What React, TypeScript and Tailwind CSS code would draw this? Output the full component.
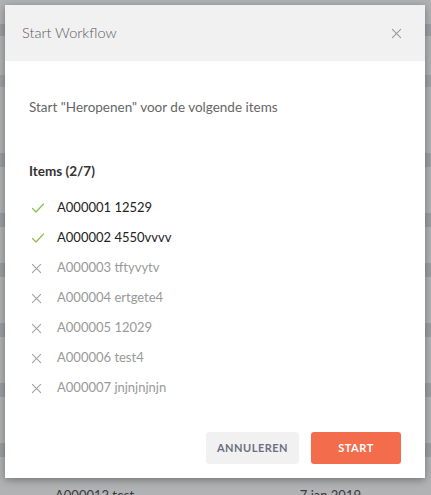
import React from 'react';

type Item = { code: string; name: string; ok: boolean };

const items: Item[] = [
  { code: 'A000001', name: '12529', ok: true },
  { code: 'A000002', name: '4550vvvv', ok: true },
  { code: 'A000003', name: 'tftyvytv', ok: false },
  { code: 'A000004', name: 'ertgete4', ok: false },
  { code: 'A000005', name: '12029', ok: false },
  { code: 'A000006', name: 'test4', ok: false },
  { code: 'A000007', name: 'jnjnjnjnjn', ok: false },
];

const CheckIcon = () => (
  <svg width="14" height="14" viewBox="0 0 14 14" fill="none">
    <path d="M1.5 7.5 L5 11 L12.5 3" stroke="#8cc152" strokeWidth="1.3" strokeLinecap="round" strokeLinejoin="round" />
  </svg>
);

const CrossIcon = ({ color = '#9a9a9a', size = 12 }: { color?: string; size?: number }) => (
  <svg width={size} height={size} viewBox="0 0 12 12" fill="none">
    <path d="M1.5 1.5 L10.5 10.5 M10.5 1.5 L1.5 10.5" stroke={color} strokeWidth="1.2" strokeLinecap="round" />
  </svg>
);

const App: React.FC = () => {
  return (
    <div
      className="relative w-[431px] h-[495px] overflow-hidden bg-[#b1b2b4]"
      style={{ fontFamily: 'Lato, "Open Sans", sans-serif' }}
    >
      {/* page behind the overlay */}
      <div className="flex flex-col">
        <div className="h-[24px]" />
        <div className="h-[12px] bg-[#9b9ea3]" />
        <div className="h-[39px]" />
        <div className="h-[12px] bg-[#9fa1a6]" />
        <div className="h-[66px]" />
        <div className="h-[14px] bg-[#9b9ea3]" />
        <div className="h-[46px]" />
        <div className="h-[14px] bg-[#9b9ea3]" />
        <div className="h-[36px]" />
        <div className="h-[14px] bg-[#9b9ea3]" />
        <div className="h-[46px]" />
        <div className="h-[14px] bg-[#9b9ea3]" />
        <div className="h-[46px]" />
        <div className="h-[14px] bg-[#9b9ea3]" />
        <div className="h-[46px]" />
        <div className="h-[14px] bg-[#9b9ea3]" />
        <div className="h-[30px]" />
        <div className="flex items-start text-[13px] text-[#3a3b3e] leading-[16px]">
          <span className="ml-[55px]">A000012 test</span>
          <span className="ml-auto mr-[70px]">7 jan 2019</span>
        </div>
      </div>

      {/* modal */}
      <div className="absolute left-[5px] top-[5px] w-[420px] h-[473px] bg-white flex flex-col shadow-[0_2px_8px_rgba(0,0,0,0.35)]">
        <div className="h-[56px] bg-[#f1f1f1] flex items-center pl-[17px] pr-[23px]">
          <span className="text-[14.5px] text-[#5a5a5a] font-light">Start Workflow</span>
          <button className="ml-auto">
            <CrossIcon color="#9a9a9a" size={11} />
          </button>
        </div>

        <div className="flex-1 px-[24px] pt-[36px]">
          <p className="text-[13.5px] leading-[20px] text-[#666]">
            Start "Heropenen" voor de volgende items
          </p>
          <h3 className="mt-[44px] text-[13.5px] leading-[20px] font-bold text-[#333]">Items (2/7)</h3>
          <ul className="mt-[12px] flex flex-col">
            {items.map((it) => (
              <li key={it.code} className="h-[30px] flex items-center">
                <span className="w-[28px] flex items-center pl-[2px]">
                  {it.ok ? <CheckIcon /> : <CrossIcon color="#a3a3a3" size={11} />}
                </span>
                <span className={`text-[13px] ${it.ok ? 'text-[#222]' : 'text-[#999]'}`}>
                  {it.code} {it.name}
                </span>
              </li>
            ))}
          </ul>
        </div>

        <div className="flex justify-end gap-[12px] pr-[24px] pb-[14px]">
          <button className="w-[93px] h-[32px] rounded-[3px] bg-[#f1f1f1] text-[#6b7080] text-[11px] font-bold tracking-[0.5px]">
            ANNULEREN
          </button>
          <button className="w-[90px] h-[32px] rounded-[3px] bg-[#f36d4d] text-white text-[11px] font-bold tracking-[0.5px]">
            START
          </button>
        </div>
      </div>
    </div>
  );
};

export default App;
